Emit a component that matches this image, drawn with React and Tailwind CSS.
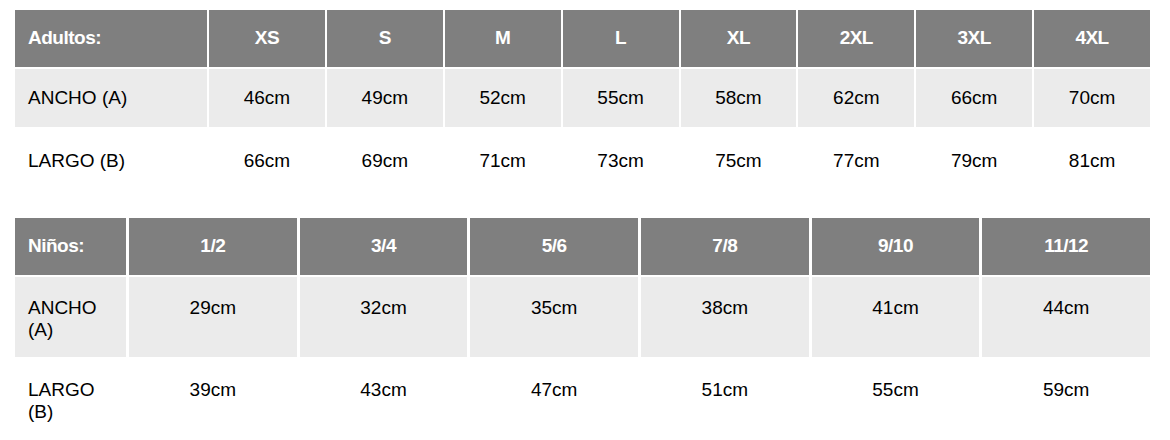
import React from "react";

const font = { fontFamily: '"Liberation Sans", Arial, Helvetica, sans-serif' };

const adultSizes = ["XS", "S", "M", "L", "XL", "2XL", "3XL", "4XL"];
const adultAncho = ["46cm", "49cm", "52cm", "55cm", "58cm", "62cm", "66cm", "70cm"];
const adultLargo = ["66cm", "69cm", "71cm", "73cm", "75cm", "77cm", "79cm", "81cm"];

const kidSizes = ["1/2", "3/4", "5/6", "7/8", "9/10", "11/12"];
const kidAncho = ["29cm", "32cm", "35cm", "38cm", "41cm", "44cm"];
const kidLargo = ["39cm", "43cm", "47cm", "51cm", "55cm", "59cm"];

export default function App() {
  return (
    <div
      className="w-[1170px] h-[440px] overflow-hidden bg-white px-[15px] pt-[10px] text-[19px] text-black"
      style={font}
    >
      {/* Adultos */}
      <div className="grid w-[1135px] grid-cols-[192px_repeat(8,1fr)] gap-x-[2px] gap-y-[2px]">
        <div className="flex h-[57px] items-center bg-[#7f7f7f] pl-[13px] font-bold tracking-[-0.5px] text-white">
          Adultos:
        </div>
        {adultSizes.map((s) => (
          <div
            key={s}
            className="flex h-[57px] items-center justify-center bg-[#7f7f7f] font-bold tracking-[-0.5px] text-white"
          >
            {s}
          </div>
        ))}

        <div className="flex h-[58px] items-center bg-[#ebebeb] pl-[13px]">ANCHO (A)</div>
        {adultAncho.map((v, i) => (
          <div key={i} className="flex h-[58px] items-center justify-center bg-[#ebebeb]">
            {v}
          </div>
        ))}

        <div className="flex h-[64px] items-center pl-[13px]">LARGO (B)</div>
        {adultLargo.map((v, i) => (
          <div key={i} className="flex h-[64px] items-center justify-center">
            {v}
          </div>
        ))}
      </div>

      {/* Niños */}
      <div className="mt-[25px] grid w-[1135px] grid-cols-[111px_repeat(6,1fr)] gap-x-[3px] gap-y-[2px]">
        <div className="flex h-[57px] items-center bg-[#7f7f7f] pl-[13px] font-bold tracking-[-0.5px] text-white">
          Niños:
        </div>
        {kidSizes.map((s) => (
          <div
            key={s}
            className="flex h-[57px] items-center justify-center bg-[#7f7f7f] font-bold tracking-[-0.5px] text-white"
          >
            {s}
          </div>
        ))}

        <div className="h-[80px] bg-[#ebebeb] pl-[13px] pt-[20px] leading-[22px]">
          ANCHO
          <br />
          (A)
        </div>
        {kidAncho.map((v, i) => (
          <div key={i} className="h-[80px] bg-[#ebebeb] pt-[20px] text-center leading-[22px]">
            {v}
          </div>
        ))}

        <div className="h-[80px] pl-[13px] pt-[20px] leading-[22px]">
          LARGO
          <br />
          (B)
        </div>
        {kidLargo.map((v, i) => (
          <div key={i} className="h-[80px] pt-[20px] text-center leading-[22px]">
            {v}
          </div>
        ))}
      </div>
    </div>
  );
}
